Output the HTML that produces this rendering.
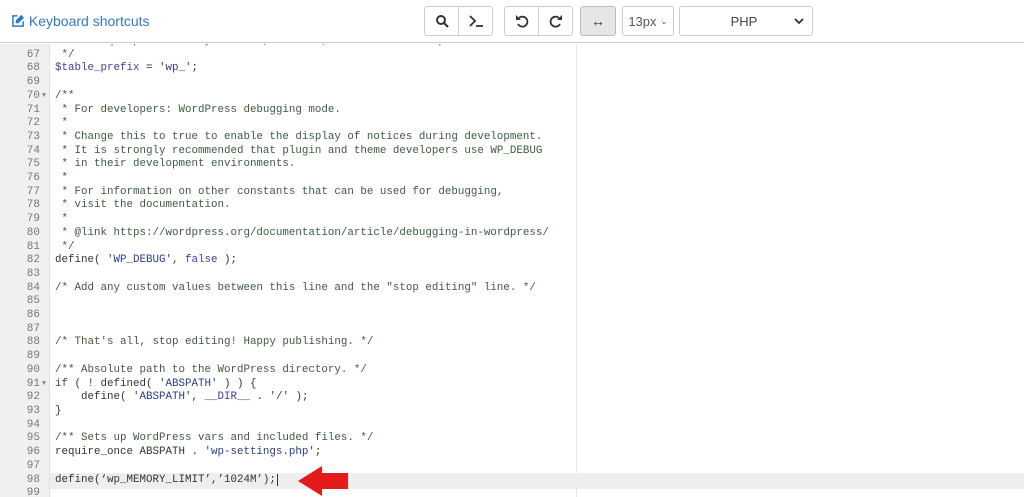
<!DOCTYPE html>
<html><head><meta charset="utf-8"><style>
*{box-sizing:border-box;margin:0;padding:0}
body{width:1024px;height:497px;overflow:hidden;background:#fff;font-family:"Liberation Sans",sans-serif;position:relative}
.top{position:absolute;left:0;top:0;width:1024px;height:43px;border-bottom:1px solid #ccc;background:#fff}
.ks{position:absolute;left:12px;top:13px;font-size:14px;color:#2f7ac4}
.btn{position:absolute;top:6px;height:30px;border:1px solid #ccc;background:#fff;display:flex;align-items:center;justify-content:center;font-size:14px;color:#333}
.ed{position:absolute;left:0;top:44px;width:1024px;height:453px;overflow:hidden}
.gut{position:absolute;left:0;top:0;width:50px;height:100%;background:#f0f0f0;border-right:1px solid #e2e2e2}
.margin{position:absolute;left:576px;top:0;width:1px;height:100%;background:#e6e6e6}
.lines{position:absolute;left:0;width:1024px}
.l{height:13.71px;line-height:13.71px;font-family:"Liberation Mono",monospace;font-size:10.83px;white-space:pre;position:relative}
.n{position:absolute;left:0;top:0;width:40px;text-align:right;color:#777;font-size:11px;line-height:13.71px}
.f{position:absolute;left:42px;color:#888;font-size:7px}
.c{position:absolute;left:55px;top:0;color:#333}
.cm{color:#3e5a3e}.s{color:#2a3a88}.k{color:#7a1f7a}.a{color:#4040a0}
</style></head><body>
<div class="top">
<div class="ks"><svg width="13" height="13" viewBox="0 0 14 14" style="vertical-align:-1px"><path d="M10 1l3 3-6 6H4V7z" fill="#2f7ac4"/><path d="M6 2H1v11h11V8" stroke="#2f7ac4" stroke-width="1.6" fill="none"/></svg> Keyboard shortcuts</div>
<div class="btn" style="left:424px;width:35px;border-radius:3px 0 0 3px"><svg width="14" height="14" viewBox="0 0 14 14"><circle cx="6" cy="6" r="4" stroke="#333" stroke-width="2" fill="none"/><path d="M9 9l4 4" stroke="#333" stroke-width="2.2"/></svg></div>
<div class="btn" style="left:458px;width:35px;border-radius:0 3px 3px 0"><svg width="16" height="14" viewBox="0 0 16 14"><path d="M2 2l5 5-5 5" stroke="#333" stroke-width="1.8" fill="none"/><path d="M8 12h7" stroke="#333" stroke-width="1.8"/></svg></div>
<div class="btn" style="left:504px;width:35px;border-radius:3px 0 0 3px"><svg width="14" height="14" viewBox="0 0 14 14"><path d="M4 4A5 5 0 1 1 3 10" stroke="#333" stroke-width="1.8" fill="none"/><path d="M1 1v5h5z" fill="#333"/></svg></div>
<div class="btn" style="left:538px;width:35px;border-radius:0 3px 3px 0"><svg width="14" height="14" viewBox="0 0 14 14"><path d="M10 4A5 5 0 1 0 11 10" stroke="#333" stroke-width="1.8" fill="none"/><path d="M13 1v5H8z" fill="#333"/></svg></div>
<div class="btn" style="left:580px;width:36px;background:#e6e6e6;border-color:#bbb;border-radius:3px">&#8596;</div>
<div class="btn" style="left:622px;width:52px;border-radius:3px;font-size:13px;color:#555">13px&nbsp;<span style="font-size:9px">&#8964;</span></div>
<div class="btn" style="left:679px;width:134px;border-radius:3px;font-size:13px;color:#444"><span style="margin-left:-4px">PHP</span><svg style="position:absolute;right:8px;top:11px" width="10" height="7" viewBox="0 0 10 7"><path d="M1 1l4 4 4-4" stroke="#333" stroke-width="1.8" fill="none"/></svg></div>
</div>
<div class="ed">
<div class="gut"></div>
<div class="margin"></div>
<div class="lines" style="top:-9px">
<div class="l"><span class="n">66</span><span class="c cm">   a unique prefix. Only numbers, letters, and underscores please!</span></div>
<div class="l"><span class="n">67</span><span class="c cm"> */</span></div>
<div class="l"><span class="n">68</span><span class="c"><span class="a">$table_prefix</span> = <span class="s">'wp_'</span>;</span></div>
<div class="l"><span class="n">69</span></div>
<div class="l"><span class="n">70</span><span class="f">&#9660;</span><span class="c cm">/**</span></div>
<div class="l"><span class="n">71</span><span class="c cm"> * For developers: WordPress debugging mode.</span></div>
<div class="l"><span class="n">72</span><span class="c cm"> *</span></div>
<div class="l"><span class="n">73</span><span class="c cm"> * Change this to true to enable the display of notices during development.</span></div>
<div class="l"><span class="n">74</span><span class="c cm"> * It is strongly recommended that plugin and theme developers use WP_DEBUG</span></div>
<div class="l"><span class="n">75</span><span class="c cm"> * in their development environments.</span></div>
<div class="l"><span class="n">76</span><span class="c cm"> *</span></div>
<div class="l"><span class="n">77</span><span class="c cm"> * For information on other constants that can be used for debugging,</span></div>
<div class="l"><span class="n">78</span><span class="c cm"> * visit the documentation.</span></div>
<div class="l"><span class="n">79</span><span class="c cm"> *</span></div>
<div class="l"><span class="n">80</span><span class="c cm"> * @link https://wordpress.org/documentation/article/debugging-in-wordpress/</span></div>
<div class="l"><span class="n">81</span><span class="c cm"> */</span></div>
<div class="l"><span class="n">82</span><span class="c">define( <span class="s">'WP_DEBUG'</span>, <span class="a">false</span> );</span></div>
<div class="l"><span class="n">83</span></div>
<div class="l"><span class="n">84</span><span class="c cm">/* Add any custom values between this line and the "stop editing" line. */</span></div>
<div class="l"><span class="n">85</span></div>
<div class="l"><span class="n">86</span></div>
<div class="l"><span class="n">87</span></div>
<div class="l"><span class="n">88</span><span class="c cm">/* That's all, stop editing! Happy publishing. */</span></div>
<div class="l"><span class="n">89</span></div>
<div class="l"><span class="n">90</span><span class="c cm">/** Absolute path to the WordPress directory. */</span></div>
<div class="l"><span class="n">91</span><span class="f">&#9660;</span><span class="c"><span class="k">if</span> ( ! defined( <span class="s">'ABSPATH'</span> ) ) {</span></div>
<div class="l"><span class="n">92</span><span class="c">    define( <span class="s">'ABSPATH'</span>, <span class="a">__DIR__</span> . <span class="s">'/'</span> );</span></div>
<div class="l"><span class="n">93</span><span class="c">}</span></div>
<div class="l"><span class="n">94</span></div>
<div class="l"><span class="n">95</span><span class="c cm">/** Sets up WordPress vars and included files. */</span></div>
<div class="l"><span class="n">96</span><span class="c">require_once ABSPATH . <span class="s">'wp-settings.php'</span>;</span></div>
<div class="l"><span class="n">97</span></div>
<div class="l"><div style="position:absolute;left:50px;right:0;top:-1px;height:16px;background:#eee"></div><span class="n">98</span><span class="c">define(‘wp_MEMORY_LIMIT’,’1024M’);<span style="border-left:1px solid #333;margin-left:1px"></span></span>
<svg style="position:absolute;left:298px;top:-8px" width="52" height="30" viewBox="0 0 52 30"><path d="M0 15L24 0v7h26v16H24v7z" fill="#e31b1b"/></svg></div>
<div class="l"><span class="n">99</span></div>
</div>
</div>
</body></html>
